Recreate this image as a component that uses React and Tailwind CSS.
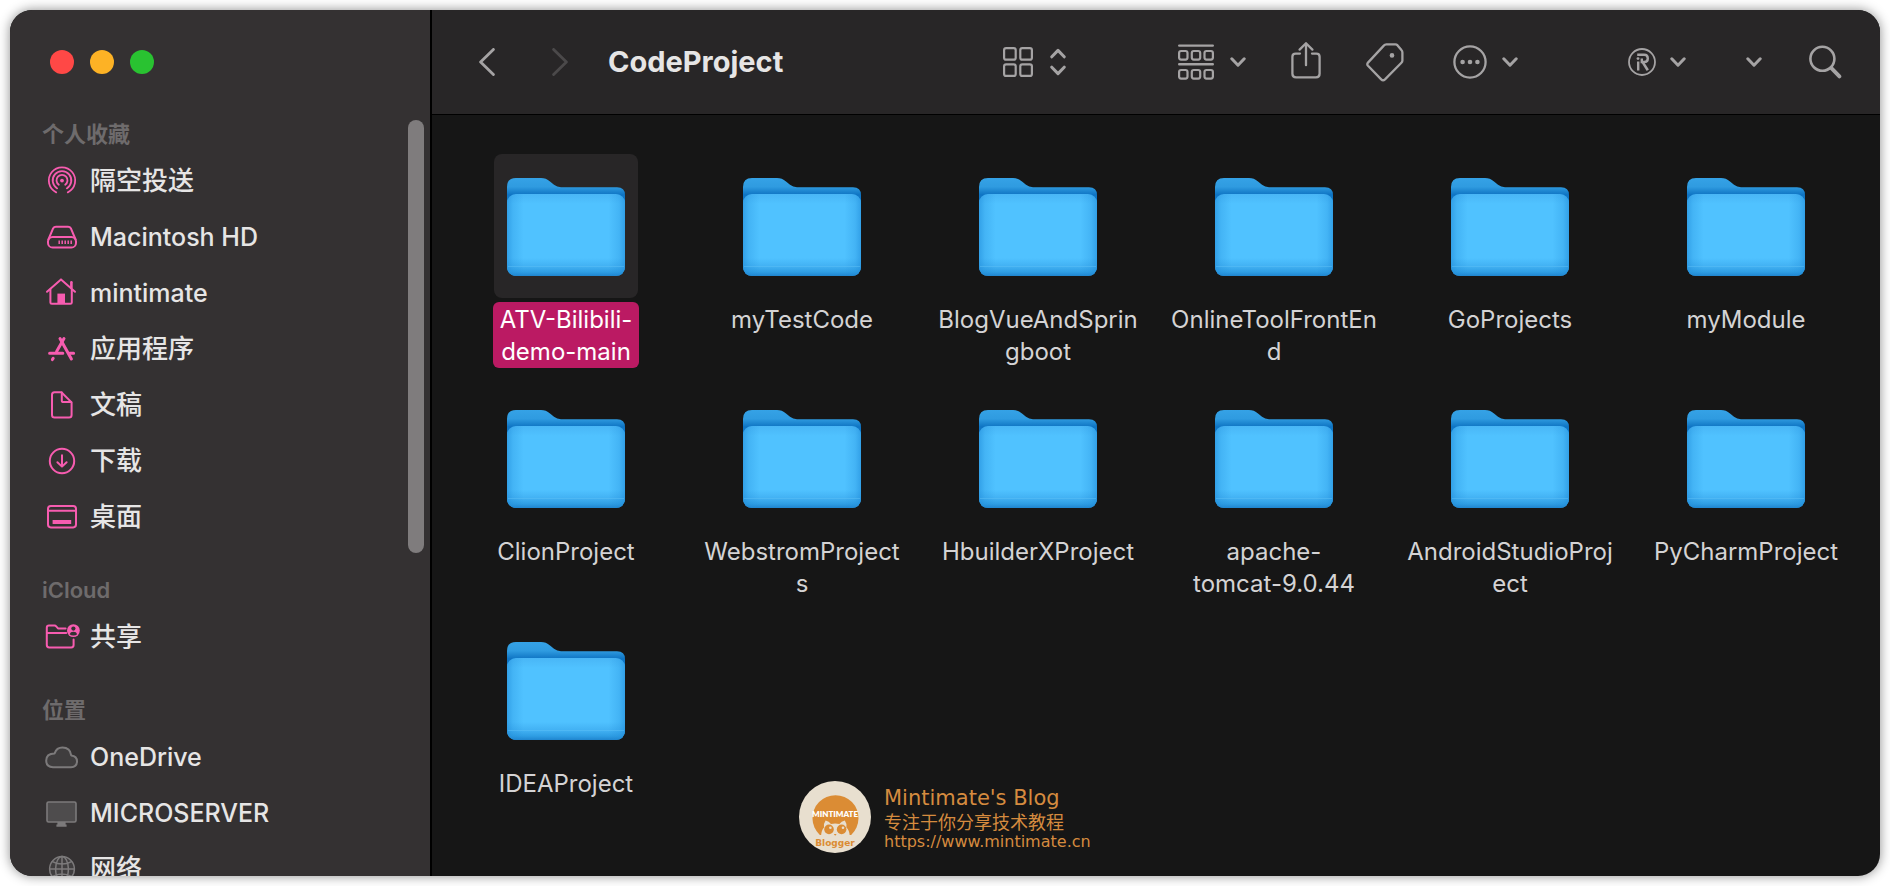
import React, { useState } from 'react';

const SidebarIcon = ({ children, muted }) => (
    <svg
        viewBox="0 0 36 36"
        className={muted ? 'h-9 w-9 shrink-0 text-[#7c7a7b]' : 'h-9 w-9 shrink-0 text-[#f75cb0]'}
        fill="none"
        stroke="currentColor"
        strokeWidth="2"
        strokeLinecap="round"
        strokeLinejoin="round"
        aria-hidden="true"
    >
        {children}
    </svg>
);

const AirDropIcon = () => (
    <SidebarIcon>
        <g strokeWidth="1.8">
            <path d="M12.2 29.4A13.2 13.2 0 1 1 23.8 29.4" />
            <path d="M13.2 25.4A9.3 9.3 0 1 1 22.8 25.4" />
            <path d="M14.8 21.8A5.5 5.5 0 1 1 21.2 21.8" />
        </g>
        <circle cx="18" cy="17.6" r="1.9" fill="currentColor" stroke="none" />
    </SidebarIcon>
);

const DiskIcon = () => (
    <SidebarIcon>
        <path d="M4.4 20.5L9 9.6Q10 7.8 12 7.8H24Q26 7.8 27 9.6L31.6 20.5" />
        <rect x="4" y="18" width="28" height="10.5" rx="4.6" />
        <path d="M15.2 21.6v3.4M18.2 21.6v3.4M21.2 21.6v3.4M24.2 21.6v3.4M27.2 21.6v3.4" strokeWidth="1.5" strokeLinecap="butt" />
    </SidebarIcon>
);

const HomeIcon = () => (
    <SidebarIcon>
        <path d="M3 16.8L17 4.4L31 16.8" />
        <path d="M6.4 14.4V27.4Q6.4 28.8 7.8 28.8H26.4Q27.8 28.8 27.8 27.4V14.4" />
        <path d="M27.4 12.6V7.2" strokeWidth="2.6" />
        <path d="M13.4 18.6H21V28.6H13.4Z" fill="currentColor" stroke="none" />
    </SidebarIcon>
);

const AppsIcon = () => (
    <SidebarIcon>
        <g strokeWidth="3">
            <path d="M20 7.6L12.6 20.6" />
            <path d="M16 7.6L27.4 28" />
            <path d="M5.6 22.2H18.8M25.6 22.2H29.6" />
            <path d="M9.2 27.2L8.4 28.6" />
        </g>
    </SidebarIcon>
);

const DocumentIcon = () => (
    <SidebarIcon>
        <path d="M10.4 5.2H17.4L27.6 15.4V28Q27.6 30.6 25 30.6H10.6Q8 30.6 8 28V7.8Q8 5.2 10.4 5.2Z" />
        <path d="M17.8 5.6V13.4Q17.8 15 19.4 15H27.2" />
    </SidebarIcon>
);

const DownloadIcon = () => (
    <SidebarIcon>
        <circle cx="18" cy="18" r="12.2" />
        <path d="M18 12.2V23.4M13.4 19.2L18 23.6L22.6 19.2" />
    </SidebarIcon>
);

const DesktopIcon = () => (
    <SidebarIcon>
        <rect x="4" y="7" width="28" height="21.4" rx="2.8" />
        <path d="M4 11.8H32" />
        <path d="M8.6 23H27.2" strokeWidth="4" strokeLinecap="butt" />
    </SidebarIcon>
);

const SharedIcon = () => (
    <SidebarIcon>
        <path d="M21.6 9.4H14L12.2 7.4Q11.6 6.6 10.6 6.6H5Q2.8 6.6 2.8 8.8V26Q2.8 28.4 5.2 28.4H27.2Q29.6 28.4 29.6 26V20.4" />
        <path d="M3 14H22.2" />
        <circle cx="29.4" cy="11.6" r="6.4" fill="currentColor" stroke="none" />
        <circle cx="29.4" cy="9.6" r="2.1" fill="#343132" stroke="none" />
        <path d="M25.6 15.2Q26.4 12.8 29.4 12.8T33.2 15.2Q31.8 16.6 29.4 16.6T25.6 15.2Z" fill="#343132" stroke="none" />
    </SidebarIcon>
);

const CloudIcon = () => (
    <SidebarIcon muted>
        <path
            d="M9 28.2H27Q33 28 33 22.2Q33 17 27.2 16.4Q26.2 8.6 18.4 8.6Q12.6 8.6 10.6 14.4Q2.2 14.4 2.2 21.6Q2.2 27.8 9 28.2Z"
            fill="#3f3d3e"
        />
    </SidebarIcon>
);

const ServerIcon = () => (
    <SidebarIcon muted>
        <rect x="3" y="7" width="29" height="20" rx="1.6" fill="#4e4c4d" strokeWidth="1.6" />
        <path d="M13.4 27H21.6V29.6H22.6V31.8H12.4V29.6H13.4Z" fill="currentColor" stroke="none" />
    </SidebarIcon>
);

const NetworkIcon = () => (
    <SidebarIcon muted>
        <g strokeWidth="1.5">
            <circle cx="18" cy="18" r="12.4" fill="#403e3f" />
            <ellipse cx="18" cy="18" rx="6.4" ry="12.4" />
            <path d="M18 5.6V30.4M5.6 18H30.4M8.4 10.6Q18 15.6 27.6 10.6M8.4 25.4Q18 20.4 27.6 25.4" />
        </g>
    </SidebarIcon>
);

const sections = [
    {
        title: '个人收藏',
        items: [
            { label: '隔空投送', icon: AirDropIcon },
            { label: 'Macintosh HD', icon: DiskIcon },
            { label: 'mintimate', icon: HomeIcon },
            { label: '应用程序', icon: AppsIcon },
            { label: '文稿', icon: DocumentIcon },
            { label: '下载', icon: DownloadIcon },
            { label: '桌面', icon: DesktopIcon },
        ],
    },
    {
        title: 'iCloud',
        items: [{ label: '共享', icon: SharedIcon }],
    },
    {
        title: '位置',
        items: [
            { label: 'OneDrive', icon: CloudIcon },
            { label: 'MICROSERVER', icon: ServerIcon },
            { label: '网络', icon: NetworkIcon },
        ],
    },
];

// Each entry holds the lines of one folder name
const folders = [
    ['ATV-Bilibili-', 'demo-main'],
    ['myTestCode'],
    ['BlogVueAndSprin', 'gboot'],
    ['OnlineToolFrontEn', 'd'],
    ['GoProjects'],
    ['myModule'],
    ['ClionProject'],
    ['WebstromProject', 's'],
    ['HbuilderXProject'],
    ['apache-', 'tomcat-9.0.44'],
    ['AndroidStudioProj', 'ect'],
    ['PyCharmProject'],
    ['IDEAProject'],
];

const isLatin = (label) => /^[A-Za-z ]+$/.test(label);

const Sidebar = () => (
    <aside className="relative flex w-[422px] shrink-0 flex-col overflow-hidden border-r-2 border-black bg-[#343132]">
        <div className="flex h-[79px] shrink-0 gap-4 pt-10 pl-10">
            <button aria-label="Close" className="h-6 w-6 rounded-full bg-[#ff4846]" />
            <button aria-label="Minimize" className="h-6 w-6 rounded-full bg-[#fdb225]" />
            <button aria-label="Zoom" className="h-6 w-6 rounded-full bg-[#29c231]" />
        </div>
        <nav className="min-h-0 flex-1 overflow-hidden">
            {sections.map((section) => (
                <section key={section.title}>
                    <h2 className="flex h-16 items-end pb-[7px] pl-8 text-[22px] leading-6 font-semibold text-[#6e6b6c]">
                        {section.title}
                    </h2>
                    <ul>
                        {section.items.map(({ label, icon: Icon }) => (
                            <li key={label}>
                                <a href="#" className="flex h-14 items-center gap-2.5 pl-[34px] font-medium text-[#e6e5e5]">
                                    <Icon />
                                    <span className={isLatin(label) ? 'text-[25px] leading-8' : 'text-[26px] leading-8'}>{label}</span>
                                </a>
                            </li>
                        ))}
                    </ul>
                </section>
            ))}
        </nav>
        <div className="absolute top-[110px] right-1.5 h-[433px] w-4 rounded-full bg-[#7f7c7d]" />
    </aside>
);

const ChevronDown = () => (
    <svg viewBox="0 0 16 10" className="h-2.5 w-4" fill="none" stroke="currentColor" strokeWidth="3" strokeLinecap="round" strokeLinejoin="round" aria-hidden="true">
        <path d="M1.8 1.8L8 8.2L14.2 1.8" />
    </svg>
);

const Toolbar = () => (
    <header className="flex h-[105px] shrink-0 items-center border-b border-black bg-[#282627] pr-[38px] pl-[47px] text-[#a5a3a4]">
        <button aria-label="Back">
            <svg viewBox="0 0 16 28" className="h-7 w-4" fill="none" stroke="currentColor" strokeWidth="2.8" strokeLinecap="round" strokeLinejoin="round">
                <path d="M14.4 1.4L1.6 14L14.4 26.6" />
            </svg>
        </button>
        <button aria-label="Forward" className="ml-[57px] text-[#4b494a]">
            <svg viewBox="0 0 16 28" className="h-7 w-4" fill="none" stroke="currentColor" strokeWidth="2.8" strokeLinecap="round" strokeLinejoin="round">
                <path d="M1.6 1.4L14.4 14L1.6 26.6" />
            </svg>
        </button>
        <h1 className="ml-10 flex-1 text-[29px] leading-9 font-bold text-[#e6e5e5]">CodeProject</h1>

        <button aria-label="View as icons" className="flex items-center gap-[17px]">
            <svg viewBox="0 0 30 30" className="h-[30px] w-[30px]" fill="none" stroke="currentColor" strokeWidth="2.2">
                <rect x="1.1" y="1.1" width="11.6" height="11.6" rx="2" />
                <rect x="17.3" y="1.1" width="11.6" height="11.6" rx="2" />
                <rect x="1.1" y="17.3" width="11.6" height="11.6" rx="2" />
                <rect x="17.3" y="17.3" width="11.6" height="11.6" rx="2" />
            </svg>
            <svg viewBox="0 0 16 28" className="h-7 w-4" fill="none" stroke="currentColor" strokeWidth="3" strokeLinecap="round" strokeLinejoin="round">
                <path d="M1.8 8.8L8 2.4L14.2 8.8M1.8 19.2L8 25.6L14.2 19.2" />
            </svg>
        </button>
        <button aria-label="Group" className="ml-28 flex items-center gap-4">
            <svg viewBox="0 0 36 36" className="h-9 w-9" fill="none" stroke="currentColor" strokeWidth="2.2">
                <path d="M1.2 1.6H34.8M1.2 20.2H34.8" strokeWidth="2.4" strokeLinecap="round" />
                <rect x="1.1" y="7" width="8.4" height="8.6" rx="2" />
                <rect x="13.8" y="7" width="8.4" height="8.6" rx="2" />
                <rect x="26.5" y="7" width="8.4" height="8.6" rx="2" />
                <rect x="1.1" y="26" width="8.4" height="8.6" rx="2" />
                <rect x="13.8" y="26" width="8.4" height="8.6" rx="2" />
                <rect x="26.5" y="26" width="8.4" height="8.6" rx="2" />
            </svg>
            <ChevronDown />
        </button>
        <button aria-label="Share" className="ml-[45px]">
            <svg viewBox="0 1 30 40" className="h-10 w-[30px]" fill="none" stroke="currentColor" strokeWidth="2.3" strokeLinecap="round" strokeLinejoin="round">
                <path d="M9 12.6H4.6Q1.4 12.6 1.4 15.8V32.8Q1.4 36.4 5 36.4H25Q28.6 36.4 28.6 32.8V15.8Q28.6 12.6 25.4 12.6H21" />
                <path d="M15 24.2V2.6M8.6 8.6L15 2.2L21.4 8.6" />
            </svg>
        </button>
        <button aria-label="Tags" className="ml-[45px]">
            <svg viewBox="0 0 38 40" className="h-10 w-[38px]" fill="none" stroke="currentColor" strokeWidth="2.3" strokeLinejoin="round">
                <path d="M20.4 2.4H29.4Q30.6 2.4 31.6 3.4L35.4 8Q36.4 9 36.4 10.4V18.4Q36.4 19.8 35.4 20.8L19 37.4Q17 39.2 15.2 37.4L2 23.8Q0.6 22.2 2 20.6L17.8 3.6Q18.8 2.4 20.4 2.4Z" />
                <circle cx="26" cy="13.4" r="2.3" fill="currentColor" stroke="none" />
            </svg>
        </button>
        <button aria-label="More actions" className="ml-[49px] flex items-center gap-[15px]">
            <svg viewBox="0 0 34 34" className="h-[34px] w-[34px]" fill="none" stroke="currentColor" strokeWidth="2.3">
                <circle cx="17" cy="17" r="15.6" />
                <g fill="currentColor" stroke="none">
                    <circle cx="9.6" cy="17" r="2.3" />
                    <circle cx="17" cy="17" r="2.3" />
                    <circle cx="24.4" cy="17" r="2.3" />
                </g>
            </svg>
            <ChevronDown />
        </button>
        <button aria-label="Services" className="ml-[110px] flex items-center gap-3.5">
            <svg viewBox="0 0 28 28" className="h-7 w-7" fill="none" stroke="currentColor" strokeWidth="1.8">
                <circle cx="14" cy="14" r="13" />
                <path d="M9.2 6.8H16.2Q19.8 6.8 19.8 10.4T16.2 14H13.8V10.6" strokeWidth="2.4" />
                <path d="M10.2 13.4V22.6" strokeWidth="2.4" />
                <path d="M14.8 14.4L19.8 22.2" strokeWidth="2.6" />
                <circle cx="10" cy="10.6" r="1.4" fill="currentColor" stroke="none" />
            </svg>
            <ChevronDown />
        </button>
        <button aria-label="More toolbar items" className="ml-[60px]">
            <ChevronDown />
        </button>
        <button aria-label="Search" className="ml-[47px]">
            <svg viewBox="0 0 33 34" className="h-[34px] w-[33px]" fill="none" stroke="currentColor" strokeLinecap="round">
                <circle cx="13.4" cy="13.8" r="12" strokeWidth="2.6" />
                <path d="M22.4 23.2L30.4 31.4" strokeWidth="3.8" />
            </svg>
        </button>
    </header>
);

// Shared by every folder drawing below
const FolderDefs = () => (
    <svg className="absolute h-0 w-0" aria-hidden="true">
        <defs>
            <linearGradient id="folderBack" x1="0" y1="0" x2="0" y2="1">
                <stop offset="0" stopColor="#35a2e6" />
                <stop offset="0.09" stopColor="#2f9be0" />
                <stop offset="0.17" stopColor="#0f75c4" />
                <stop offset="1" stopColor="#2a8fd6" />
            </linearGradient>
            <linearGradient id="folderFront" x1="0" y1="0" x2="0" y2="1">
                <stop offset="0" stopColor="#49b6f6" />
                <stop offset="0.12" stopColor="#50c2ff" />
                <stop offset="0.78" stopColor="#50c2ff" />
                <stop offset="0.88" stopColor="#42b1f3" />
                <stop offset="0.95" stopColor="#2f9ee4" />
                <stop offset="1" stopColor="#1f85cf" />
            </linearGradient>
            <linearGradient id="folderSides" x1="0" y1="0" x2="1" y2="0">
                <stop offset="0" stopColor="#1e8ad8" stopOpacity="0.6" />
                <stop offset="0.05" stopColor="#1e8ad8" stopOpacity="0.25" />
                <stop offset="0.14" stopColor="#1e8ad8" stopOpacity="0" />
                <stop offset="0.86" stopColor="#1e8ad8" stopOpacity="0" />
                <stop offset="0.95" stopColor="#1e8ad8" stopOpacity="0.25" />
                <stop offset="1" stopColor="#1e8ad8" stopOpacity="0.6" />
            </linearGradient>
        </defs>
    </svg>
);

const FolderIcon = () => (
    <svg viewBox="0 0 118 98" className="h-[98px] w-[118px]" aria-hidden="true">
        <path
            d="M0 9Q0 0 9 0H34Q39 0 43 3.4L47 6.8Q50 9.2 54 9.2H110Q118 9.2 118 17V88Q118 98 108 98H10Q0 98 0 88Z"
            fill="url(#folderBack)"
        />
        <rect x="0" y="16" width="118" height="82" rx="9" fill="url(#folderFront)" />
        <rect x="0" y="16" width="118" height="82" rx="9" fill="url(#folderSides)" />
        <path d="M1 88.5H117" stroke="#5cc0f6" strokeOpacity="0.5" strokeWidth="1" />
    </svg>
);

const Folder = ({ lines, selected, onSelect }) => (
    <button onClick={onSelect} className="flex h-[232px] flex-col items-center gap-1">
        <span className={selected ? 'flex h-36 w-36 items-center justify-center rounded-lg bg-[#282627] pt-0.5' : 'flex h-36 w-36 items-center justify-center rounded-lg pt-0.5'}>
            <FolderIcon />
        </span>
        <span className={selected ? 'rounded-md bg-[#bb1a63] px-[7px] pt-0.5 text-white' : 'px-[7px] pt-0.5 text-[#d4d3d4]'}>
            {lines.map((line) => (
                <span key={line} className="block text-[24px] leading-8 whitespace-nowrap">
                    {line}
                </span>
            ))}
        </span>
    </button>
);

const Watermark = () => (
    <div className="absolute bottom-[23px] left-[367px] flex items-center gap-[13px] text-[#d58b3f]">
        <svg viewBox="0 0 72 72" className="h-[72px] w-[72px]" aria-hidden="true">
            <circle cx="36" cy="36" r="36" fill="#e8dfcf" />
            <path d="M20.8 54A23 23 0 1 1 52.2 54Z" fill="#db8c34" />
            <path d="M22 55Q22.4 49 25 46.4Q24.4 42.6 26.6 39.6Q30 40.6 32 43Q36 41.8 40.4 43Q42.4 40.6 45.8 39.6Q48 42.6 47.4 46.4Q50.4 49 50.8 55Z" fill="#e8dfcf" />
            <circle cx="30" cy="48.4" r="4.8" fill="#db8c34" />
            <circle cx="42.6" cy="48.4" r="4.8" fill="#db8c34" />
            <circle cx="31.4" cy="46.8" r="1.3" fill="#e8dfcf" />
            <circle cx="44" cy="46.8" r="1.3" fill="#e8dfcf" />
            <path d="M34.8 53H37.6L36.2 54.8Z" fill="#db8c34" />
            <text x="36" y="36" textAnchor="middle" fontSize="8" fontWeight="800" fill="#fff" fontFamily="Lato, sans-serif">
                MINTIMATE
            </text>
            <text x="36" y="65" textAnchor="middle" fontSize="9" fontWeight="700" fill="#db8c34" fontFamily="DejaVu Sans, sans-serif">
                Blogger
            </text>
        </svg>
        <div className="font-['DejaVu_Sans','Noto_Sans_CJK_SC',sans-serif]">
            <p className="text-[21px] leading-7">Mintimate's Blog</p>
            <p className="text-[18px] leading-[22px]">专注于你分享技术教程</p>
            <p className="text-[16px] leading-4">https://www.mintimate.cn</p>
        </div>
    </div>
);

const App = () => {
    const [selected, setSelected] = useState(0);

    return (
        <div className="h-screen bg-white p-2.5 font-[Inter,'Noto_Sans_CJK_SC',sans-serif]">
            <div className="flex h-full overflow-hidden rounded-[22px] bg-[#161616] shadow-[0_0_12px_rgba(0,0,0,0.45)]">
                <Sidebar />
                <div className="flex min-w-0 flex-1 flex-col">
                    <Toolbar />
                    <main className="relative min-h-0 flex-1 overflow-hidden">
                        <FolderDefs />
                        <div className="grid grid-cols-6 px-4 pt-[39px]">
                            {folders.map((lines, i) => (
                                <Folder key={lines[0]} lines={lines} selected={selected === i} onSelect={() => setSelected(i)} />
                            ))}
                        </div>
                        <Watermark />
                    </main>
                </div>
            </div>
        </div>
    );
};

export default App;
